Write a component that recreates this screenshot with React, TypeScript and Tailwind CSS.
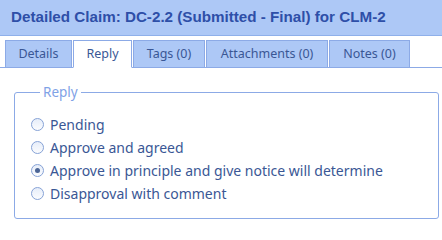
const tabs = [
  { label: "Details", w: "w-[67px]" },
  { label: "Reply", w: "w-[59px]", active: true },
  { label: "Tags (0)", w: "w-[72px]" },
  { label: "Attachments (0)", w: "w-[122px]" },
  { label: "Notes (0)", w: "w-[81px]" },
];

const options = [
  "Pending",
  "Approve and agreed",
  "Approve in principle and give notice will determine",
  "Disapproval with comment",
];

function Radio({ checked }: { checked?: boolean }) {
  return (
    <span className="w-[13px] h-[13px] rounded-full border border-[#86a2d6] bg-gradient-to-b from-[#e6edf9] to-[#fbfcfe] flex items-center justify-center shrink-0">
      {checked && <span className="w-[5px] h-[5px] rounded-full bg-[#4b6596]" />}
    </span>
  );
}

export default function App() {
  const selected = 2;
  return (
    <div className="w-[442px] h-[221px] bg-white overflow-hidden" style={{ fontFamily: '"Noto Sans", "Open Sans", sans-serif' }}>
      {/* Title bar */}
      <div className="h-[36px] bg-[#adc8f6] border-b border-[#8fb0ea] flex items-center pl-[11px]">
        <span className="text-[15.2px] font-bold text-[#2e4fa8]" style={{ fontFamily: '"Liberation Sans", Arial, sans-serif' }}>
          Detailed Claim: DC-2.2 (Submitted - Final) for CLM-2
        </span>
      </div>

      {/* Tabs */}
      <div className="mt-[4px] flex items-end gap-px pl-[5px] border-b border-[#8caae6] h-[28px]">
        {tabs.map(t => (
          <div
            key={t.label}
            className={`${t.w} h-[27px] flex items-center justify-center text-[12.5px] text-[#3a5795] border border-[#8caae6] ${
              t.active ? "bg-white border-b-white -mb-px h-[28px]" : "bg-[#adc8f6] border-b-0"
            }`}
          >
            {t.label}
          </div>
        ))}
      </div>

      {/* Reply group */}
      <fieldset className="ml-[14px] mr-[3px] mt-[16px] h-[135px] border border-[#8caae6] rounded-[3px] pl-[16px] pt-[13px]">
        <legend className="ml-[9px] px-[3px] text-[13.5px] text-[#7fa2e6] leading-[16px]">Reply</legend>
        <div className="flex flex-col">
          {options.map((o, i) => (
            <label key={o} className="flex items-center gap-[6px] h-[23px] text-[14px] text-[#3a5795]">
              <Radio checked={i === selected} />
              {o}
            </label>
          ))}
        </div>
      </fieldset>
    </div>
  );
}
